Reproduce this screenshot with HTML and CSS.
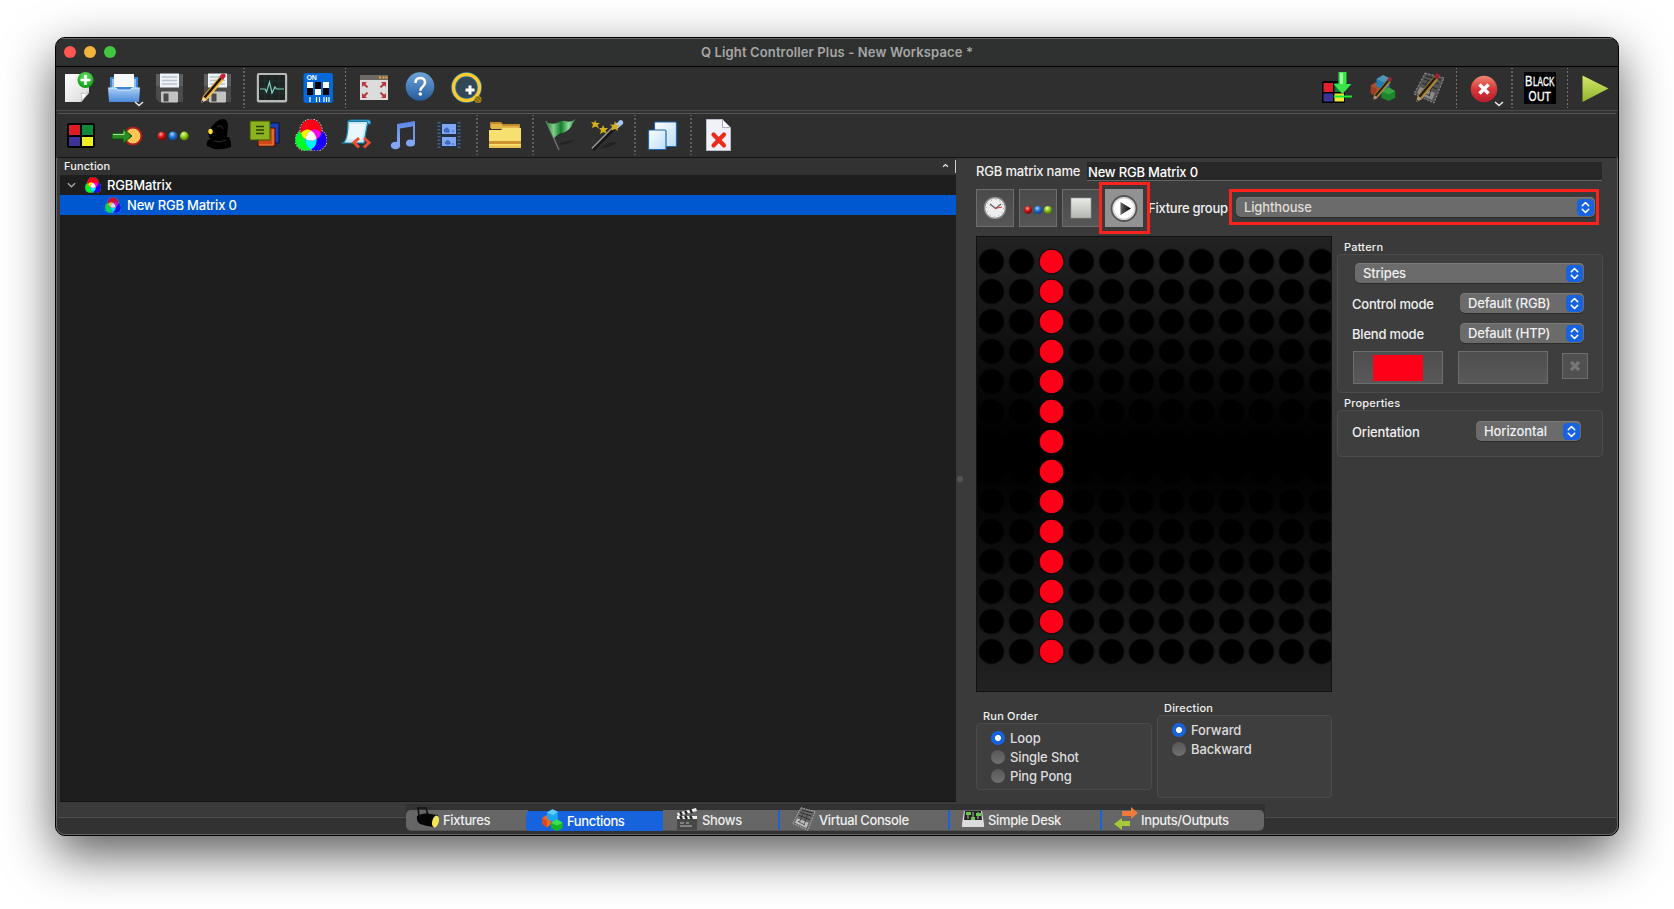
FILE: index.html
```html
<!DOCTYPE html>
<html lang="en">
<head>
<meta charset="utf-8">
<title>Q Light Controller Plus - New Workspace *</title>
<link rel="stylesheet" href="styles.css">
</head>
<body>
<svg class="defs" width="0" height="0" aria-hidden="true">
  <defs>
    <linearGradient id="gBlue" x1="0" y1="0" x2="0" y2="1"><stop offset="0" stop-color="#a9cdf6"/><stop offset="1" stop-color="#4b8ad8"/></linearGradient>
    <linearGradient id="gPaper" x1="0" y1="0" x2="1" y2="1"><stop offset="0" stop-color="#fff"/><stop offset="1" stop-color="#d8d8d8"/></linearGradient>
    <linearGradient id="gSheet" x1="0" y1="0" x2="1" y2="1"><stop offset="0" stop-color="#fff"/><stop offset="1" stop-color="#b9dcfb"/></linearGradient>
    <linearGradient id="gPlay" x1="0" y1="0" x2="0" y2="1"><stop offset="0" stop-color="#d4e86a"/><stop offset="1" stop-color="#8fb52c"/></linearGradient>
    <linearGradient id="gFlag" x1="0" y1="0" x2="1" y2="0"><stop offset="0" stop-color="#1f7a35"/><stop offset=".25" stop-color="#7fcf8a"/><stop offset=".5" stop-color="#127a2c"/><stop offset=".75" stop-color="#8fdc9a"/><stop offset="1" stop-color="#1d8a38"/></linearGradient>
    <linearGradient id="gNote" x1="0" y1="0" x2="0" y2="1"><stop offset="0" stop-color="#5c86e6"/><stop offset="1" stop-color="#86aaff"/></linearGradient>
    <linearGradient id="gStop" x1="0" y1="0" x2="0" y2="1"><stop offset="0" stop-color="#e9ebe7"/><stop offset="1" stop-color="#b4b7b0"/></linearGradient>
    <linearGradient id="gX" x1="0" y1="0" x2="0" y2="1"><stop offset="0" stop-color="#ee8672"/><stop offset=".5" stop-color="#d8383a"/><stop offset="1" stop-color="#b81b2b"/></linearGradient>
    <linearGradient id="gHelp" x1="0" y1="0" x2="0" y2="1"><stop offset="0" stop-color="#6ea3d8"/><stop offset="1" stop-color="#265c9d"/></linearGradient>
    <linearGradient id="gTri" x1="0" y1="0" x2="1" y2="0"><stop offset="0" stop-color="#666"/><stop offset="1" stop-color="#000"/></linearGradient>
    <radialGradient id="gRed" cx=".4" cy=".3" r=".7"><stop offset="0" stop-color="#ff9a9a"/><stop offset=".5" stop-color="#d01515"/><stop offset="1" stop-color="#7d0000"/></radialGradient>
    <radialGradient id="gBall" cx=".4" cy=".3" r=".7"><stop offset="0" stop-color="#a8d4ff"/><stop offset=".5" stop-color="#1c74d8"/><stop offset="1" stop-color="#0b3f86"/></radialGradient>
    <radialGradient id="gLime" cx=".4" cy=".3" r=".7"><stop offset="0" stop-color="#e8ffa0"/><stop offset=".5" stop-color="#8fc81c"/><stop offset="1" stop-color="#4b7a00"/></radialGradient>
    <radialGradient id="gPlus" cx=".5" cy=".3" r=".7"><stop offset="0" stop-color="#6fe06a"/><stop offset="1" stop-color="#089a12"/></radialGradient>
    <pattern id="heads" x=".5" y="10.500" width="30" height="30" patternUnits="userSpaceOnUse"><circle cx="15" cy="15" r="12.500" fill="#000"/></pattern>

    <symbol id="rgb" viewBox="0 0 32 32">
      <g stroke="#fff" stroke-width="1" stroke-dasharray="1.5 1.5" fill="none"><circle cx="16" cy="11" r="11"/><circle cx="11" cy="21" r="11"/><circle cx="21" cy="21" r="11"/></g>
      <circle cx="11" cy="21" r="10.600" fill="#00ff2a"/><circle cx="21" cy="21" r="10.600" fill="#1a00ff"/>
      <path d="M16 11.600a10.600 10.600 0 0 1 0 18.800a10.600 10.600 0 0 1 0-18.800z" fill="#00f4ff"/>
      <circle cx="16" cy="11" r="10.600" fill="#ff0015"/>
      <path d="M5.900 14.200Q10.500 8.500 16 11.600Q10.800 15.500 10.500 20Q7 18 5.900 14.200z" fill="#f7f700"/>
      <path d="M26.100 14.200Q21.500 8.500 16 11.600Q21.200 15.500 21.500 20Q25 18 26.100 14.200z" fill="#ff00f0"/>
      <path d="M16 11.600Q21 15 21.500 20Q16 23.200 10.500 20Q11 15 16 11.600z" fill="#fff"/>
    </symbol>
    <symbol id="floppy" viewBox="0 0 32 32">
      <path d="M2 2h27v28H5l-3-3z" fill="#4b4b4b"/><path d="M2 2h27v12H2z" fill="#5e5e5e"/>
      <rect x="6" y="1.500" width="19" height="14" fill="#eef3f7"/><path d="M8 5h15M8 8.500h15M8 12h15" stroke="#b9c4cd" stroke-width="1.300"/>
      <rect x="7" y="19.500" width="17" height="11" rx="1" fill="#c3c3c3"/><rect x="9.500" y="21.500" width="5" height="8" fill="#4a4a4a"/>
    </symbol>
    <symbol id="pencil" viewBox="0 0 32 32">
      <path d="M1 31l2-7L20 4l4 3.500L8 27z" fill="#e5a62a"/><path d="M4.500 25.500L21 6" stroke="#191510" stroke-width="2.300"/><path d="M7.300 26.500L23.500 7.500" stroke="#f8ce62" stroke-width="1"/>
      <path d="M1 31l2-6 4.200 3z" fill="#efd4a5"/><path d="M1 31l1-2.500 1.500 1z" fill="#222"/><path d="M19.500 4.500l2.500-2.700q2-1 3.500 1 .8 1.500-.8 2.700L23 8z" fill="#d21d2e"/>
    </symbol>
    <symbol id="balls" viewBox="0 0 32 32"><circle cx="4.700" cy="17" r="4.300" fill="url(#gRed)"/><circle cx="16" cy="17" r="4.500" fill="url(#gBall)"/><circle cx="27.300" cy="17" r="4.400" fill="url(#gLime)"/></symbol>
    <symbol id="hexes" viewBox="0 0 32 32">
      <path d="M1 13l6-4 7 4v9l-6 5-7-5z" fill="#f4642a"/><path d="M1 13l7 4v10l-7-5z" fill="#d6491b"/>
      <path d="M8 5l8-5 8 4v10l-7 5-9-5z" fill="#1ba6f4"/><path d="M8 5l9 4 7-5-8-4z" fill="#5fcbff"/>
      <path d="M14 20l9-5 8 5v8l-8 4-9-4z" fill="#14b52c"/><path d="M14 20l9 4 8-4-8-5z" fill="#3fe04f"/>
    </symbol>
    <symbol id="console" viewBox="0 0 32 32">
      <path d="M12 1l19 5-10 25L1 22z" fill="#686868" stroke="#c9c9c9" stroke-width="1" stroke-dasharray="2 1.500"/>
      <path d="M13 4l15 4M11 7l15 5M9 11l15 6" stroke="#2b2b2b" stroke-width="1.300"/><path d="M7 15l15 6-3 7-15-7z" fill="#bdbdbd"/><path d="M8 19l9 5M15 8l-5 12M21 9l-5 15" stroke="#363636"/>
    </symbol>
    <symbol id="updown" viewBox="0 0 17 17"><rect width="17" height="17" rx="4.500" fill="#1763df"/><path d="M5.300 6.700l3.200-3.200 3.200 3.200M5.300 10.300l3.200 3.200 3.200-3.200" fill="none" stroke="#fff" stroke-width="1.600" stroke-linecap="round" stroke-linejoin="round"/></symbol>
  </defs>
</svg>

<div class="window">
  <header class="titlebar">
    <span class="light red"></span><span class="light amber"></span><span class="light green"></span>
    <span class="title">Q Light Controller Plus - New Workspace *</span>
  </header>

  <div class="toolbar main">
    <span class="tool"><svg viewBox="-1 0 32 32"><path d="M2 2h24v19l-8 9H2z" fill="url(#gPaper)"/><path d="M18 30q2-5 0-9 5 2 8-1z" fill="#fff" stroke="#aaa" stroke-width=".6"/><circle cx="22.500" cy="8" r="8" fill="url(#gPlus)"/><path d="M22.500 3v10M17.500 8h10" stroke="#fff" stroke-width="2.600"/></svg></span>
    <span class="tool"><svg viewBox="0 0 32 32"><path d="M2 5h28v15H2z" fill="#3e86d8"/><path d="M4 7h3v9H4zM25 7h3v9h-3z" fill="#8fbdf0"/><path d="M6 2h20v13H6z" fill="#f8f9fa"/><path d="M0 16h8l2 2h12l2-2h8l-1 14H1z" fill="url(#gBlue)"/><path d="M0 16h8l2 2h12l2-2h8" fill="none" stroke="#d6e9fd"/></svg><svg class="drop" viewBox="0 0 10 6"><path d="M1 1l4 3.500L9 1" fill="none" stroke="#e8e8e8" stroke-width="1.600"/></svg></span>
    <span class="tool"><svg viewBox="0 0 32 32"><use href="#floppy"/></svg></span>
    <span class="tool"><svg viewBox="0 0 32 32"><use href="#floppy" x="2"/><use href="#pencil"/></svg></span>
    <i class="sep"></i>
    <span class="tool"><svg viewBox="0 0 32 32"><rect x=".8" y="1" width="30.400" height="29.500" rx="2" fill="#b8b8b8"/><rect x="3" y="3" width="26" height="25" fill="#1c2323"/><path d="M3 9h26M3 15h26M3 21h26M9 3v25M16 3v25M23 3v25" stroke="#2a3a38" stroke-width=".7"/><path d="M4 17h5l1.500 3 3-10 2.500 11 3-6 1.500 2H28" fill="none" stroke="#7fd8c4" stroke-width="1.200"/></svg></span>
    <span class="tool"><svg viewBox="0 0 32 32"><rect x="1.500" y="1" width="29.500" height="30" rx="3" fill="#0568d8"/><text x="4.500" y="8" class="dip">ON</text><path d="M5 10h6v13H5zM13 10h6v13h-6zM21 10h6v13h-6z" fill="#000"/><path d="M5 10h6v6H5zM13 17h6v6h-6zM21 10h6v6h-6z" fill="#fff"/><path d="M8 25v5M14.500 25v5M17.500 25v5M22 25v5M24.500 25v5M27 25v5" stroke="#fff" stroke-width="1.200"/></svg></span>
    <i class="sep wide"></i>
    <span class="tool"><svg viewBox="0 0 32 32"><rect x="2" y="3" width="28" height="25" fill="#dcdcdc"/><path d="M2 3h28v5H2z" fill="#6e6a66"/><path d="M21 5.500h2M24.500 5.500h2M27.500 5.500h2" stroke="#f4a62a" stroke-width="2"/><path d="M4 10h5l-1.700 1.700 3 3-1.500 1.300-3-2.700L4 15zM28 10h-5l1.700 1.700-3 3 1.500 1.300 3-2.700L28 15zM4 26h5l-1.700-1.700 3-3L8.800 20l-3 2.700L4 21zM28 26h-5l1.700-1.700-3-3 1.500-1.300 3 2.700L28 21z" fill="#b5373c"/></svg></span>
    <span class="tool"><svg viewBox="0 0 32 32"><circle cx="16" cy="14.500" r="14.300" fill="url(#gHelp)"/><path d="M11.500 11q0-5 4.800-5 4.700 0 4.700 4.500 0 2.500-2.600 4.400-2 1.500-2 3.800" fill="none" stroke="#fff" stroke-width="2.500"/><circle cx="16.300" cy="22" r="1.800" fill="#fff"/></svg></span>
    <span class="tool"><svg viewBox="-1 0 32 32"><circle cx="15.500" cy="15.500" r="13" fill="#344756" stroke="#1e6aa0" stroke-width="5"/><circle cx="15.500" cy="15.500" r="13" fill="none" stroke="#fbc92c" stroke-width="3.600"/><path d="M19 13.500v9M14.500 18h9" stroke="#fff" stroke-width="3"/><circle cx="27" cy="27.500" r="3.600" fill="#a98716"/><path d="M24.500 27l3 3M26.500 25l3.500 3.500" stroke="#4d420f"/></svg></span>
    <span class="spring"></span>
    <span class="tool"><svg viewBox="0 0 32 32"><rect x="1" y="9" width="23" height="22" rx="1.500" fill="#000"/><rect x="2.500" y="11" width="9.500" height="9" fill="#e3202a"/><rect x="13.500" y="11" width="9.500" height="9" fill="#137a35"/><rect x="2.500" y="21.500" width="9.500" height="8" fill="#3a3596"/><rect x="13.500" y="21.500" width="9.500" height="8" fill="#f0e72a"/><path d="M17.500 0h8v12h5L21.500 22l-9-10h5z" fill="#39e548"/><path d="M19 1h3v11h-3z" fill="#9cf8a2"/><path d="M13 24.500h18" stroke="#12ef2f" stroke-width="2"/></svg></span>
    <span class="tool"><svg class="dim" viewBox="0 0 32 32"><use href="#hexes" width="26" height="28" x="3" y="2"/><use href="#pencil" x="5" y="4" width="25" height="25"/></svg></span>
    <span class="tool"><svg class="dim" viewBox="0 0 32 32"><use href="#console"/><use href="#pencil" x="2" width="31" height="31"/></svg></span>
    <i class="sep"></i>
    <span class="tool"><svg viewBox="0 0 32 32"><circle cx="16" cy="17" r="13.200" fill="url(#gX)"/><path d="M11.500 12.500l9 9M20.500 12.500l-9 9" stroke="#fff" stroke-width="3.400"/></svg><svg class="drop" viewBox="0 0 10 6"><path d="M1 1l4 3.500L9 1" fill="none" stroke="#e8e8e8" stroke-width="1.600"/></svg></span>
    <i class="sep"></i>
    <span class="tool"><svg viewBox="0 0 32 32"><rect width="32" height="32" fill="#000"/><g class="black"><text x="1" y="13.500" textLength="7.500" lengthAdjust="spacingAndGlyphs" class="cap">B</text><text x="9" y="13.500" textLength="21.500" lengthAdjust="spacingAndGlyphs">LACK</text><text x="4.500" y="29" textLength="8" lengthAdjust="spacingAndGlyphs" class="cap">O</text><text x="13" y="29" textLength="14" lengthAdjust="spacingAndGlyphs">UT</text></g></svg></span>
    <i class="sep"></i>
    <span class="tool"><svg viewBox="0 0 32 32"><path d="M3.500 3.500L29.500 16.500 3.500 30z" fill="url(#gPlay)"/></svg></span>
  </div>

  <div class="toolbar functions">
    <span class="tool"><svg viewBox="0 0 32 32"><rect x="2" y="4" width="28" height="25" rx="2.500" fill="#000"/><rect x="4" y="6" width="11" height="10" fill="#e01b22"/><rect x="17" y="6" width="11" height="10" fill="#12893a"/><rect x="4" y="18" width="11" height="9" fill="#3c3398"/><rect x="17" y="18" width="11" height="9" fill="#efec2a"/></svg></span>
    <span class="tool"><svg viewBox="0 0 32 32"><circle cx="22" cy="17" r="8.500" fill="#ffc653" stroke="#a8201b" stroke-width="2"/><path d="M1 14h11V9.500l9 7.500-9 7.500V20H1z" fill="#2a8a24" stroke="#0d4d0c" stroke-width="1"/><path d="M2 15.500h11v-3" fill="none" stroke="#a3dd94"/></svg></span>
    <span class="tool"><svg viewBox="0 0 32 32"><use href="#balls"/></svg></span>
    <span class="tool"><svg viewBox="0 0 32 32"><path d="M13 3q3-3 8-3 4 1 4 6l-1 12-5 3-11-1q-4-3-2-8Q8 7 13 3zM5 21l6-2 15-1 2 5v5q-8 3-17 2l-7-3q-1-3 1-6z" fill="#000"/><path d="M14 8q5-3 6 2M11 22q6 2 12-1" stroke="#2e2e2e" fill="none"/><ellipse cx="7.500" cy="12.500" rx="2.200" ry="2.800" fill="#f5e03e"/></svg></span>
    <span class="tool"><svg viewBox="0 0 32 32"><rect x="16" y="4" width="14" height="20" fill="#173fc0" stroke="#04123f"/><rect x="9" y="9" width="17" height="18" fill="#d04a18" stroke="#441000"/><path d="M24 10v16H10" fill="none" stroke="#f18a4d"/><rect x="1" y="2" width="20" height="19" fill="#8cb21f" stroke="#3d5206"/><path d="M7 7.500h8M7 11h8M7 14.500h8" stroke="#254200" stroke-width="1.500"/></svg></span>
    <span class="tool"><svg viewBox="0 0 32 32"><use href="#rgb"/></svg></span>
    <span class="tool"><svg viewBox="0 0 32 32"><path d="M7 2h20l-2 10-2 12H2q5-3 5-22z" fill="#cfe9f4" stroke="#1989b8" stroke-width="1.200"/><path d="M9 1h19q2 0 1.500 4H27l-1-2.500H8z" fill="#5db4d6" stroke="#137aa6"/><path d="M9 5h15l-3 15H7z" fill="#e9f6fb"/><path d="M18 19l-5 4.500 5 5M23 19l5 4.500-5 5" fill="none" stroke="#ee4d2d" stroke-width="3"/></svg></span>
    <span class="tool"><svg viewBox="0 0 32 32"><path d="M10 5l18-3v5L13 9.500V26h-3z" fill="url(#gNote)"/><path d="M26 5h2v19h-2z" fill="#7196f0"/><ellipse cx="8.500" cy="26.500" rx="4.700" ry="3.800" fill="#83a5f6"/><ellipse cx="23.500" cy="24" rx="4.500" ry="3.500" fill="#83a5f6"/></svg></span>
    <span class="tool"><svg viewBox="0 0 32 32"><rect x="4" y="3" width="24" height="26" fill="#24303f"/><path d="M6 3v26M26 3v26" stroke="#4c6078" stroke-width="3" stroke-dasharray="1.500 2"/><rect x="9" y="5" width="14" height="10" fill="#7fa6f7"/><rect x="9" y="18" width="14" height="9" fill="#7fa6f7"/><path d="M11 11q3-4 5 0v2h-4zM12 24q2-4 5-1v2h-4zM19 12h2M19 25h2" stroke="#3763b6" fill="#466fc5"/></svg></span>
    <i class="sep"></i>
    <span class="tool"><svg viewBox="0 0 32 32"><path d="M1 3h11l2 2h17v4H1z" fill="#c08a26"/><path d="M2 5h10l2 2h16v3H2z" fill="#e2b54a"/><path d="M0 11h12l2-2h18v19H0z" fill="#f7e070"/><path d="M0 22h32v3H0z" fill="#cb9430"/><path d="M0 26.500h32V29H0z" fill="#e9c251"/></svg></span>
    <i class="sep"></i>
    <span class="tool"><svg viewBox="0 0 32 32"><path d="M16 26q8-1 13-5-5 0-14 3z" fill="#222"/><path d="M1 2l13 29" stroke="#777" stroke-width="1.300"/><path d="M1 3q6 3 11 1 5-3 8-2 5 2 11-2-4 4-5 8-5 6-10 6-3 1-7 5z" fill="url(#gFlag)"/></svg></span>
    <span class="tool"><svg viewBox="0 0 32 32"><path d="M8 30q15-2 18-7-9 0-15 5z" fill="#222"/><path d="M1.500 30.500L28 4" stroke="#161616" stroke-width="4"/><path d="M.8 29.500L26 4" stroke="#999" stroke-width="1.500"/><path d="M23 7l6-6q4 0 3 4l-6 5z" fill="#a6c8f2"/><path d="M4 1l1.500 3L9 4 6.500 6 8 9.500 4.500 7.500 1 9l1-3.500L0 3l3.500.5zM12 6l1.500 3h3.500l-2.500 2.500 1.500 3.500-3.500-2L9 15l1-3.500L8 9h3zM24 2l1.500 4h3L26 8.500l1 3.500-3-2-3.500 1.500 1-3.500-2.500-2.500 4 .2z" fill="#d4b01c"/></svg></span>
    <i class="sep"></i>
    <span class="tool"><svg viewBox="0 0 32 32"><rect x="7.500" y="3" width="22" height="24.500" rx="1" fill="url(#gSheet)" stroke="#1f66ae" stroke-width="1.200"/><rect x="1.500" y="11" width="17.500" height="19.500" rx="1" fill="url(#gSheet)" stroke="#1f66ae" stroke-width="1.200"/></svg></span>
    <i class="sep"></i>
    <span class="tool"><svg viewBox="0 0 32 32"><path d="M3.500.5h16l8 8v23h-24z" fill="#f1f1fa" stroke="#bdbdcf"/><path d="M19.500.5v8h8z" fill="#fff" stroke="#aaaabc"/><path d="M10.500 15.500l10.500 11M21 15.500l-10.500 11" stroke="#ed2c1b" stroke-width="4.200" stroke-linecap="round"/></svg></span>
  </div>

  <main class="workspace">
    <section class="tree">
      <div class="tree-head"><span>Function</span><svg class="sort" viewBox="0 0 8 5"><path d="M1.200 4L4 1.500 6.800 4" fill="none" stroke="#eee" stroke-width="1.400"/></svg></div>
      <div class="tree-row"><svg class="arrow" viewBox="0 0 10 6"><path d="M1 1l4 4 4-4" fill="none" stroke="#a5a5a5" stroke-width="1.500"/></svg><svg class="mini" viewBox="0 0 32 32"><use href="#rgb"/></svg><span>RGBMatrix</span></div>
      <div class="tree-row child"><svg class="mini faded" viewBox="0 0 32 32"><use href="#rgb"/></svg><span>New RGB Matrix 0</span></div>
    </section>
    <div class="splitter"><i></i></div>

    <section class="editor">
      <div class="name-row"><label>RGB matrix name</label><div class="field">New RGB Matrix 0</div></div>
      <div class="action-row">
        <span class="btn"><svg viewBox="0 0 32 32"><circle cx="16" cy="16" r="10.500" fill="#eee" stroke="#8a8a8a" stroke-width="1.400"/><circle cx="16" cy="16" r="8.500" fill="none" stroke="#999" stroke-dasharray="1 3.450"/><path d="M11 12l5.500 4.500L22 12" fill="none" stroke="#555" stroke-width="1.100"/><path d="M16 16.500l7-1.500" stroke="#d33"/></svg></span>
        <span class="btn"><svg viewBox="0 0 32 32"><use href="#balls" x="2" y="1" width="28" height="32"/></svg></span>
        <span class="btn"><svg viewBox="0 0 32 32"><rect x="6" y="6" width="20" height="20" fill="url(#gStop)" stroke="#999" stroke-width=".6"/></svg></span>
        <span class="btn on"><svg viewBox="0 0 32 32"><circle cx="16" cy="16.500" r="12.500" fill="#d8d8d8" stroke="#555" stroke-width="1.800"/><circle cx="16" cy="16.500" r="10" fill="#fff"/><path d="M12.500 10L23 16.500 12.500 23z" fill="url(#gTri)"/></svg><i class="mark play-mark"></i></span>
        <label>Fixture group</label>
        <div class="combo group"><span>Lighthouse</span><svg viewBox="0 0 17 17"><use href="#updown"/></svg><i class="mark group-mark"></i></div>
      </div>
      <div class="body-row">
        <div class="left-col">
          <svg class="matrix" viewBox="0 0 356 456">
            <rect x=".5" y="10.500" width="354.500" height="420" fill="url(#heads)"/>
            <g fill="#ff0019"><circle cx="75.500" cy="25.500" r="11.800"/><circle cx="75.500" cy="55.500" r="11.800"/><circle cx="75.500" cy="85.500" r="11.800"/><circle cx="75.500" cy="115.500" r="11.800"/><circle cx="75.500" cy="145.500" r="11.800"/><circle cx="75.500" cy="175.500" r="11.800"/><circle cx="75.500" cy="205.500" r="11.800"/><circle cx="75.500" cy="235.500" r="11.800"/><circle cx="75.500" cy="265.500" r="11.800"/><circle cx="75.500" cy="295.500" r="11.800"/><circle cx="75.500" cy="325.500" r="11.800"/><circle cx="75.500" cy="355.500" r="11.800"/><circle cx="75.500" cy="385.500" r="11.800"/><circle cx="75.500" cy="415.500" r="11.800"/></g>
          </svg>
          <div class="radio-row">
            <div class="group-box order"><h3>Run Order</h3><div class="frame"><p class="checked">Loop</p><p>Single Shot</p><p>Ping Pong</p></div></div>
            <div class="group-box direction"><h3>Direction</h3><div class="frame"><p class="checked">Forward</p><p>Backward</p></div></div>
          </div>
        </div>
        <div class="right-col">
          <h3>Pattern</h3>
          <div class="frame pattern">
            <div class="combo stripes"><span>Stripes</span><svg viewBox="0 0 17 17"><use href="#updown"/></svg></div>
            <div class="opt"><label>Control mode</label><div class="combo mode"><span>Default (RGB)</span><svg viewBox="0 0 17 17"><use href="#updown"/></svg></div></div>
            <div class="opt"><label>Blend mode</label><div class="combo mode"><span>Default (HTP)</span><svg viewBox="0 0 17 17"><use href="#updown"/></svg></div></div>
            <div class="colors"><span class="swatch"><i></i></span><span class="swatch"></span><span class="clear"><svg viewBox="0 0 12 12"><path d="M2 2l8 8M10 2l-8 8" stroke="#767676" stroke-width="3.200"/></svg></span></div>
          </div>
          <h3 class="props-title">Properties</h3>
          <div class="frame props"><label>Orientation</label><div class="combo orient"><span>Horizontal</span><svg viewBox="0 0 17 17"><use href="#updown"/></svg></div></div>
        </div>
      </div>
    </section>
  </main>

  <footer class="footer">
    <nav class="tabs">
      <span class="tab fixtures"><svg viewBox="0 0 24 24"><path d="M3 9L2 1h8l2 7" fill="none" stroke="#111" stroke-width="1.600"/><path d="M1 9q8-4 13-2l8 1-4 12-7-1-7-2Q0 14 1 9z" fill="#050505"/><ellipse cx="19.500" cy="14.500" rx="3.300" ry="6" transform="rotate(14 19.500 14.500)" fill="#f6e45a"/></svg><span>Fixtures</span></span>
      <span class="tab active functions-tab"><svg viewBox="0 0 32 32"><use href="#hexes" x="2" width="29"/></svg><span>Functions</span></span>
      <span class="tab shows"><svg viewBox="0 0 24 24"><path d="M2 6l19-5 1 3L3 9z" fill="#eee"/><path d="M5 5l2 3M10 4l2 3M15 2l2 4" stroke="#222" stroke-width="2.300"/><rect x="2" y="9" width="20" height="14" fill="#484848"/><path d="M2 9h20v3H2z" fill="#eee"/><path d="M5 9l2 3M10 9l2 3M15 9l2 3" stroke="#222" stroke-width="2.300"/><path d="M5 16h4M11 16h3M5 19h12" stroke="#bbb"/></svg><span>Shows</span></span>
      <span class="tab div console-tab"><svg viewBox="0 0 32 32"><use href="#console"/></svg><span>Virtual Console</span></span>
      <span class="tab div desk"><svg viewBox="0 0 24 24"><path d="M3 4h18l2 13v3H1v-3z" fill="#ddd"/><path d="M4 4h16l1 9H3z" fill="#222"/><path d="M7 5v7M12 5v7M17 5v7" stroke="#bbb"/><path d="M5 5h5v3H5zM10 10h4v3h-4zM15 6h5v3h-5z" fill="#63c84a"/></svg><span>Simple Desk</span></span>
      <span class="tab div io"><svg viewBox="0 0 24 24"><path d="M8 4h9V0l7 6-7 6V9H8z" fill="#ee7a3b"/><path d="M16 14H8v-3l-8 6 8 6v-4h8z" fill="#a6c83b"/></svg><span>Inputs/Outputs</span></span>
    </nav>
  </footer>
</div>
</body>
</html>
```

FILE: styles.css
```css
* { box-sizing: border-box; }
body { margin: 0; padding: 37px 55px; height: 909px; overflow: hidden; background: #fff; font: 500 13px/16px Inter, "Liberation Sans", sans-serif; letter-spacing: -.14px; color: #f0f0f0; }
svg { display: block; flex: none; }
.defs { position: absolute; }
h3, p { margin: 0; }
h3 { font-size: 11px; font-weight: 500; line-height: 14px; letter-spacing: .2px; }

.window { width: 1564px; height: 799px; border: 1px solid #000; border-radius: 10px; background: #313131; box-shadow: 0 18px 50px rgba(0,0,0,.65); display: flex; flex-direction: column; overflow: hidden; }

.titlebar { height: 29px; flex: none; display: flex; align-items: center; padding-left: 8px; gap: 8px; background: #2f3131; border-bottom: 1px solid #000; box-shadow: inset 0 1px #696969; }
.light { width: 12px; height: 12px; border-radius: 50%; }
.red { background: #ff5650; }
.amber { background: #f4b43c; }
.green { background: #42c840; }
.title { flex: 1; text-align: center; margin-right: 68px; color: #a6a6a6; font-size: 13px; font-weight: 600; letter-spacing: .14px; }

.toolbar { display: flex; align-items: center; flex: none; background: #2f2f2f; }
.main { height: 44px; padding-bottom: 1px; border-bottom: 1px solid #4b4b4b; }
.main .tool:first-child { margin-left: -1px; }
.functions { height: 45px; margin: 2px 2px 0; padding-bottom: 1px; border-top: 1px solid #565656; border-bottom: 1px solid #151515; }
.tool { width: 46px; height: 32px; display: flex; justify-content: center; position: relative; flex: none; }
.tool svg { width: 32px; height: 32px; overflow: visible; }
.tool .drop { position: absolute; width: 10px; height: 6px; right: 3px; bottom: -3px; }
.sep { width: 9.500px; height: 40px; flex: none; background: radial-gradient(circle, #777 .6px, transparent .9px) center / 9.500px 4px repeat-y; }
.wide { margin-right: 1px; }
.functions .sep { width: 10px; background-size: 10px 4px; }
.spring { flex: 1; }
.dim { opacity: .65; }
.dip { font: bold 7px "Liberation Sans", sans-serif; fill: #fff; }
.black { font: 400 13px "Liberation Sans", sans-serif; letter-spacing: 0; fill: #fff; stroke: #fff; stroke-width: .35px; }
.cap { font-size: 15.500px; }

.workspace { flex: 1; min-height: 0; display: flex; background: #3a3a3a; box-shadow: inset -1px 0 #666, inset 1px 0 #666; }
.tree { width: 896px; margin: 0 0 15px 4px; background: #1e1e1e; border-bottom: 1px solid #141414; }
.tree-head { height: 17px; background: #323232; display: flex; align-items: center; justify-content: space-between; padding: 0 7px 2px 4px; font-size: 11px; letter-spacing: .1px; background-image: linear-gradient(#ccc, #ccc); background-size: 1px 13px; background-position: 895px 2px; background-repeat: no-repeat; }
.sort { width: 7px; height: 5px; }
.tree-row { height: 20px; display: flex; align-items: center; padding-left: 7px; color: #fff; }
.arrow { width: 9px; height: 6px; margin-right: 9px; }
.mini { width: 16px; height: 16px; margin-right: 6px; }
.faded { opacity: .8; }
.child { background: #0058d1; padding-left: 45px; letter-spacing: -.2px; }
.splitter { width: 7px; display: flex; align-items: center; justify-content: center; }
.splitter i { width: 6px; height: 6px; border-radius: 50%; background: #555; margin-bottom: 17px; }

.editor { width: 640px; padding: 4px 0 0 13px; }
.name-row { display: flex; height: 19px; align-items: center; letter-spacing: -.19px; }
.name-row label { width: 111px; height: 18px; }
.field { width: 515px; height: 19px; line-height: 20px; padding-left: 1px; background: #282828; border-bottom: 1px solid #646464; color: #fff; }
.action-row { display: flex; align-items: center; height: 38px; margin-top: 8px; }
.btn { position: relative; width: 38px; height: 38px; margin-right: 5px; border: 1px solid #6d6d6d; background: linear-gradient(#4a4a4a, #565656); display: flex; align-items: center; justify-content: center; flex: none; }
.btn svg { width: 32px; height: 32px; }
.btn.on { background: #929292; border-color: #929292; margin-right: 5px; }
.mark { position: absolute; border: 3px solid #fb211c; }
.play-mark { left: -7px; top: -8px; width: 51px; height: 52px; }
.group-mark { left: -7px; top: -8px; width: 370px; height: 36px; }
.action-row label { width: 88px; white-space: nowrap; letter-spacing: -.25px; }
.combo { position: relative; height: 20px; border-radius: 5px; background: #6b6b6b; display: flex; align-items: center; justify-content: space-between; padding: 0 1px 0 8px; line-height: 20px; box-shadow: 0 1px 1px rgba(0,0,0,.3), inset 0 1px #7a7a7a; }
.combo svg { width: 17px; height: 17px; }
.group { width: 359px; margin-top: -2px; color: #ddd; }

.body-row { display: flex; margin-top: 9px; }
.matrix { width: 356px; height: 456px; background: linear-gradient(#222, #000 45%, #000 50%, #222); box-shadow: inset 0 0 0 1px #111; }
.radio-row { display: flex; align-items: flex-start; gap: 5px; }
.frame { border: 1px solid #4b4b4b; border-radius: 4px; background: #3e3e3e; }
.order { width: 176px; padding-top: 17px; }
.order .frame { height: 67px; padding: 4px 0 0 14px; }
.direction { width: 175px; padding-top: 9px; }
.direction .frame { height: 83px; padding: 4px 0 0 14px; }
.group-box h3 { padding-left: 7px; }
.frame p { display: flex; align-items: center; height: 19px; gap: 5px; color: #ddd; }
.frame p::before { content: ""; width: 14px; height: 14px; border-radius: 50%; background: linear-gradient(#575757, #707070); }
.frame p.checked::before { background: radial-gradient(circle, #fff 2.600px, #1763df 3.400px); }

.right-col { width: 266px; margin-left: 5px; padding-top: 4px; }
.right-col h3 { padding-left: 7px; }
.pattern { height: 139px; padding: 8px 18px 0 15px; }
.stripes { width: 229px; margin-left: 2px; }
.opt { display: flex; justify-content: space-between; align-items: center; height: 20px; margin-top: 10px; margin-left: -1px; }
.opt label { padding-top: 2px; letter-spacing: -.2px; }
.mode { width: 124px; letter-spacing: -.17px; }
.colors { display: flex; margin-top: 8px; width: 236px; }
.swatch { width: 90px; height: 33px; margin-right: 15px; border: 1px solid #6d6d6d; background: linear-gradient(#4e4e4e, #595959); display: flex; align-items: center; justify-content: center; }
.swatch i { width: 50px; height: 26px; background: #ff0019; }
.clear { width: 26px; height: 26px; margin: 2px 0 0 -1px; border: 1px solid #6d6d6d; background: #505050; display: flex; align-items: center; justify-content: center; }
.clear svg { width: 12px; height: 12px; }
.props-title { margin-top: 3px; }
.props { height: 47px; display: flex; justify-content: space-between; align-items: flex-start; padding: 10px 21px 0 14px; }
.props label { padding-top: 3px; }
.orient { width: 105px; letter-spacing: -.1px; }

.footer { height: 18px; flex: none; border-top: 1px solid #4d4d4d; background: #323232; box-shadow: inset 1px 0 #666, inset 0 -1px #666, inset -1px 0 #666; display: flex; border-radius: 0 0 9px 9px; }
.tabs { position: relative; height: 30px; margin: -14px 0 0 350px; padding-top: 6px; width: 859px; background: #323232; display: flex; letter-spacing: -.36px; }
.tab { height: 20px; background: #666; display: flex; align-items: center; position: relative; white-space: nowrap; color: #eee; box-shadow: 0 1px #555; }
.tab svg { width: 24px; height: 24px; margin: -3px 3px 0 0; }
.fixtures { width: 122px; border-radius: 5px 0 0 5px; padding-left: 10px; }
.functions-tab { width: 137px; padding-left: 14px; height: 20px; margin: 1px 0 0 -2px; border-radius: 4px 0 0 4px; }
.tab.active { background: #1763dd; color: #fff; box-shadow: none; }
.shows { width: 115px; padding-left: 12px; }
.console-tab { width: 170px; padding-left: 12px; }
.desk { width: 152px; padding-left: 11px; }
.io { width: 164px; padding-left: 12px; border-radius: 0 5px 5px 0; }
.tab.div { border-left: 2px solid #1763dd; }
```
